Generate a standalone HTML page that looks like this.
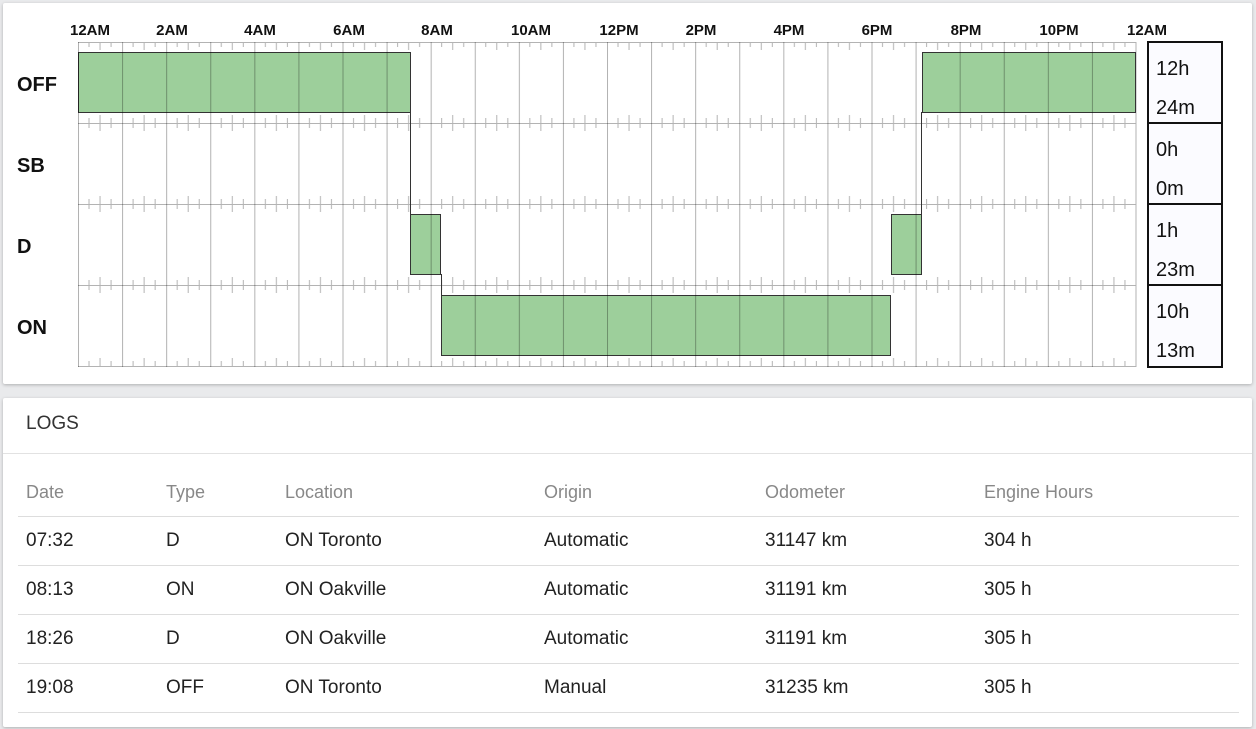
<!DOCTYPE html>
<html><head><meta charset="utf-8"><style>
body{margin:0;background:#e9eaec;width:1256px;height:729px;overflow:hidden;font-family:"Liberation Sans",Arial,sans-serif;}
.card{position:absolute;left:3px;width:1249px;background:#fff;border-radius:2px;box-shadow:0 1px 3px rgba(0,0,0,.25);}
#c1{top:3px;height:381px;}
#c2{top:398px;height:329px;}
.logs{position:absolute;left:23px;top:15px;font-size:19px;color:#333;}
.hr{position:absolute;left:0;right:0;top:55px;border-top:1px solid #e2e2e2;}
table{position:absolute;left:15px;top:70px;width:1221px;border-collapse:collapse;font-size:19px;}
td,th{text-align:left;font-weight:normal;padding:0 0 0 8px;height:48px;border-bottom:1px solid #ddd;color:#222;}
th{color:#888;font-size:18px;}
</style></head><body>
<div class="card" id="c1"></div>
<svg style="position:absolute;left:0;top:0" width="1256" height="390">
<defs>
<pattern id="dn" patternUnits="userSpaceOnUse" x="78" y="0" width="44.083" height="400">
<g stroke="#b3b3b3" stroke-width="1">
<line x1="11.02" y1="42" x2="11.02" y2="47"/><line x1="22.04" y1="42" x2="22.04" y2="50"/><line x1="33.06" y1="42" x2="33.06" y2="47"/>
<line x1="11.02" y1="118" x2="11.02" y2="128"/><line x1="22.04" y1="115" x2="22.04" y2="131"/><line x1="33.06" y1="118" x2="33.06" y2="128"/>
<line x1="11.02" y1="199" x2="11.02" y2="209"/><line x1="22.04" y1="196" x2="22.04" y2="212"/><line x1="33.06" y1="199" x2="33.06" y2="209"/>
<line x1="11.02" y1="280" x2="11.02" y2="290"/><line x1="22.04" y1="277" x2="22.04" y2="293"/><line x1="33.06" y1="280" x2="33.06" y2="290"/>
<line x1="11.02" y1="361" x2="11.02" y2="366"/><line x1="22.04" y1="358" x2="22.04" y2="366"/><line x1="33.06" y1="361" x2="33.06" y2="366"/>
</g></pattern>
<pattern id="vl" patternUnits="userSpaceOnUse" x="78" y="0" width="44.083" height="400">
<line x1="0.5" y1="0" x2="0.5" y2="400" stroke="rgba(0,0,0,0.3)" stroke-width="1"/></pattern>
</defs>
<g font-weight="bold" font-size="15" text-anchor="middle" fill="#111">
<text x="90" y="35">12AM</text><text x="172" y="35">2AM</text><text x="260" y="35">4AM</text><text x="349" y="35">6AM</text><text x="437" y="35">8AM</text><text x="531" y="35">10AM</text><text x="619" y="35">12PM</text><text x="701" y="35">2PM</text><text x="789" y="35">4PM</text><text x="877" y="35">6PM</text><text x="966" y="35">8PM</text><text x="1059" y="35">10PM</text><text x="1147" y="35">12AM</text>
</g>
<g font-weight="bold" font-size="20" fill="#111">
<text x="17" y="91">OFF</text><text x="17" y="172">SB</text><text x="17" y="253">D</text><text x="17" y="334">ON</text>
</g>
<rect x="78" y="0" width="1058" height="390" fill="url(#dn)"/>
<g stroke="#b3b3b3" stroke-width="1">
<line x1="78" y1="42.5" x2="1136" y2="42.5"/><line x1="78" y1="123.5" x2="1136" y2="123.5"/><line x1="78" y1="204.5" x2="1136" y2="204.5"/><line x1="78" y1="285.5" x2="1136" y2="285.5"/><line x1="78" y1="366.5" x2="1136" y2="366.5"/>
<line x1="1136" y1="42" x2="1136" y2="367"/>
</g>
<g fill="#9dcf9b" stroke="#333" stroke-width="1">
<rect x="78.5" y="52.5" width="332" height="60"/>
<rect x="410.5" y="214.5" width="30" height="60"/>
<rect x="441.5" y="295.5" width="449" height="60"/>
<rect x="891.5" y="214.5" width="30" height="60"/>
<rect x="922.5" y="52.5" width="213" height="60"/>
</g>
<g stroke="#333" stroke-width="1">
<line x1="410.5" y1="112" x2="410.5" y2="215"/><line x1="441.5" y1="274" x2="441.5" y2="296"/><line x1="891.5" y1="274" x2="891.5" y2="215"/><line x1="921.5" y1="214" x2="921.5" y2="112"/>
</g>
<rect x="78" y="42" width="1058" height="325" fill="url(#vl)"/>
<g fill="#fbfbff" stroke="#111" stroke-width="2">
<rect x="1148" y="42" width="74" height="81"/><rect x="1148" y="123" width="74" height="81"/><rect x="1148" y="204" width="74" height="81"/><rect x="1148" y="285" width="74" height="82"/>
</g>
<g font-size="20" fill="#111">
<text x="1156" y="75">12h</text><text x="1156" y="114">24m</text>
<text x="1156" y="156">0h</text><text x="1156" y="195">0m</text>
<text x="1156" y="237">1h</text><text x="1156" y="276">23m</text>
<text x="1156" y="318">10h</text><text x="1156" y="357">13m</text>
</g>
</svg>
<div class="card" id="c2">
<div class="logs">LOGS</div><div class="hr"></div>
<table>
<tr><th style="width:132px">Date</th><th style="width:111px">Type</th><th style="width:251px">Location</th><th style="width:213px">Origin</th><th style="width:211px">Odometer</th><th>Engine Hours</th></tr>
<tr><td>07:32</td><td>D</td><td>ON Toronto</td><td>Automatic</td><td>31147 km</td><td>304 h</td></tr>
<tr><td>08:13</td><td>ON</td><td>ON Oakville</td><td>Automatic</td><td>31191 km</td><td>305 h</td></tr>
<tr><td>18:26</td><td>D</td><td>ON Oakville</td><td>Automatic</td><td>31191 km</td><td>305 h</td></tr>
<tr><td>19:08</td><td>OFF</td><td>ON Toronto</td><td>Manual</td><td>31235 km</td><td>305 h</td></tr>
</table>
</div>
</body></html>
